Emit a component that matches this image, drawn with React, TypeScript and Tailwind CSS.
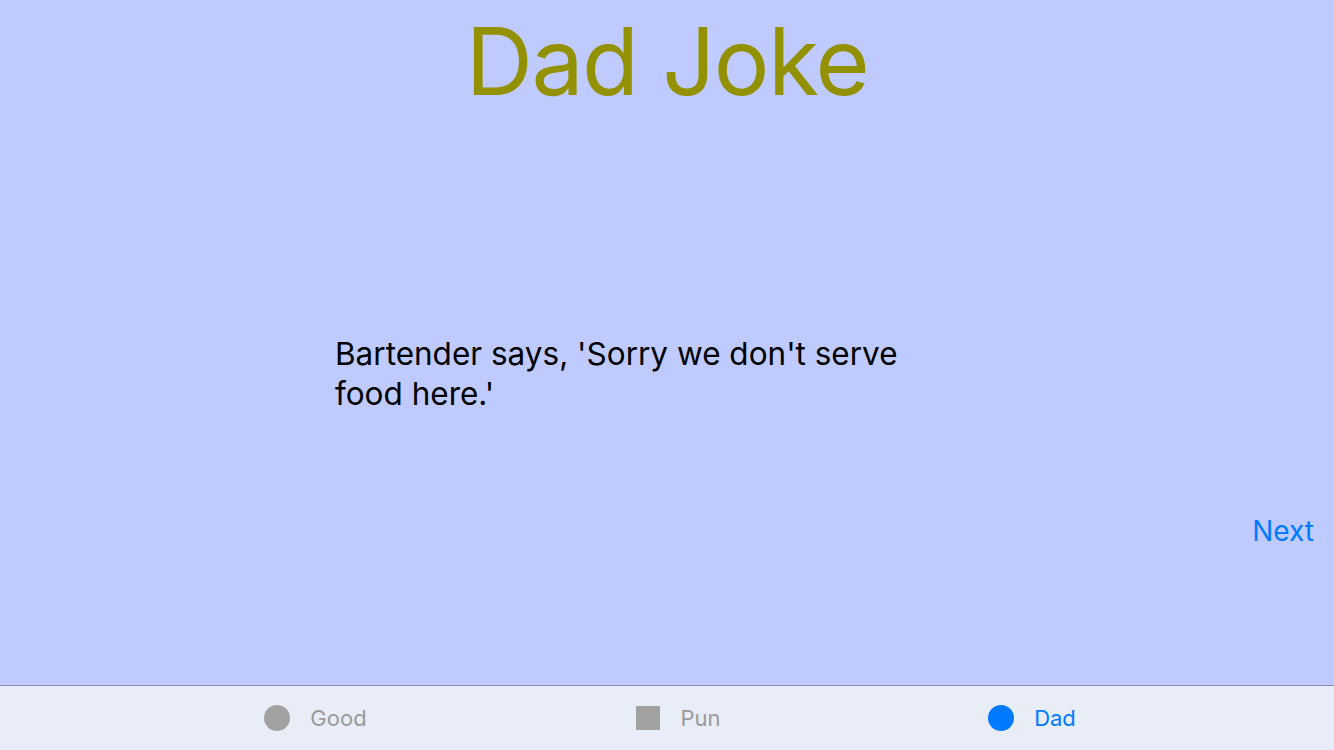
const font = { fontFamily: "Inter, 'Noto Sans', sans-serif" };

function TabItem({
  label,
  shape,
  active,
  width,
}: {
  label: string;
  shape: "circle" | "square";
  active?: boolean;
  width: string;
}) {
  const color = active ? "text-[#007aff]" : "text-[#9a9a9a]";
  return (
    <div className={`flex items-center justify-center gap-5 ${width}`}>
      {shape === "circle" ? (
        <span className={`block h-[26px] w-[26px] rounded-full ${active ? "bg-[#007aff]" : "bg-[#a2a2a2]"}`} />
      ) : (
        <span className="block h-[24px] w-[24px] bg-[#a2a2a2]" />
      )}
      <span className={`text-[22px] leading-none ${color}`}>{label}</span>
    </div>
  );
}

export default function App() {
  return (
    <main className="flex h-[750px] w-[1334px] flex-col bg-[#bfcbfe]" style={font}>
      <div className="flex flex-1 flex-col">
        <h1 className="pt-[6px] text-center text-[93px] leading-[110px] tracking-[-1.5px] text-[#949100]">
          Dad Joke
        </h1>
        <div className="pl-[335px] pt-[218px]">
          <p className="w-[600px] text-[31.5px] leading-[40px] text-black">
            Bartender says, 'Sorry we don't serve food here.'
          </p>
        </div>
        <div className="flex justify-end pr-[20px] pt-[103px]">
          <button className="text-[28px] leading-none text-[#007aff]">Next</button>
        </div>
      </div>
      <nav className="flex h-[65px] items-center border-t border-[#878ba8] bg-[#e9edf8] pl-[134px]">
        <TabItem label="Good" shape="circle" width="w-[363px]" />
        <TabItem label="Pun" shape="square" width="w-[363px]" />
        <TabItem label="Dad" shape="circle" active width="w-[344px]" />
      </nav>
    </main>
  );
}
